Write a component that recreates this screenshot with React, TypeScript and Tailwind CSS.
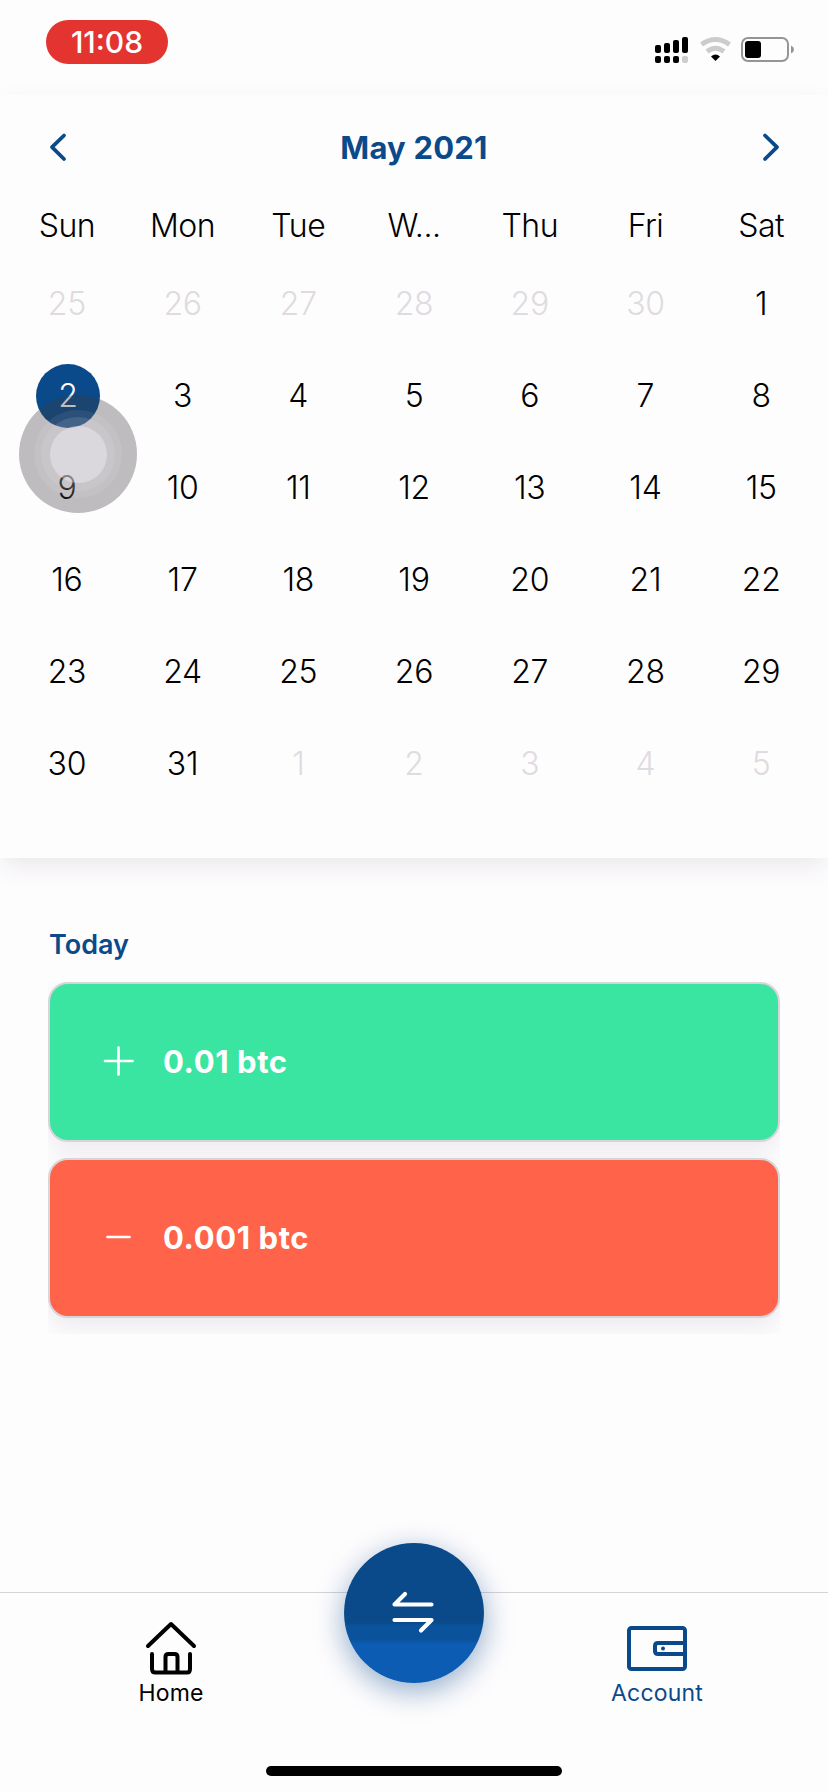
const weekdays = ['Sun', 'Mon', 'Tue', 'W...', 'Thu', 'Fri', 'Sat'];

const days = Array.from({ length: 42 }, (_, i) => {
  if (i < 6) return { label: 25 + i, muted: true };
  if (i < 37) return { label: i - 5, muted: false };
  return { label: i - 36, muted: true };
});

function StatusBar() {
  return (
    <header className="flex h-[95px] items-start justify-between pt-5 pr-[34px] pl-[46px]">
      <div className="flex h-11 w-[122px] items-center justify-center rounded-full bg-[#e3342f] text-[30px] leading-none font-[450] text-white">
        11:08
      </div>
      <svg className="mt-4 h-7 w-[140px]" viewBox="654 36 140 28" fill="#000">
        <rect x="655" y="45" width="6" height="8" rx="2" />
        <rect x="664" y="43" width="6" height="10" rx="2" />
        <rect x="673" y="40" width="6" height="13" rx="2" />
        <rect x="682" y="37" width="6" height="16" rx="2" />
        <rect x="655" y="56" width="6" height="7" rx="2" />
        <rect x="664" y="56" width="6" height="7" rx="2" />
        <rect x="673" y="56" width="6" height="7" rx="2" />
        <rect x="682" y="56" width="6" height="7" rx="2" fill="#cdcbce" />
        <path d="M701.5 44.5Q715.5 34.5 729.5 44.5" fill="none" stroke="#cdcbce" strokeWidth="5" />
        <path d="M707 51.5Q715.5 45 724 51.5" fill="none" stroke="#cdcbce" strokeWidth="5" />
        <path d="M711 56.5Q715.5 52.5 720 56.5L715.5 61Z" />
        <rect x="742" y="38" width="46" height="23" rx="6" fill="none" stroke="#969498" strokeWidth="2" />
        <rect x="745" y="41" width="16" height="17" rx="3" />
        <path d="M791 45.500Q794 47 794 49.500Q794 52 791 53.500Z" fill="#969498" />
      </svg>
    </header>
  );
}

function Chevron({ left = false }: { left?: boolean }) {
  return (
    <svg className="h-8 w-5" viewBox="0 0 20 32" fill="none" stroke="#0b4a8a" strokeWidth="3.8" strokeLinecap="round" strokeLinejoin="round">
      <path d={left ? 'M17 4.500L5 16.200L17 28' : 'M4 4.500L16 16.200L4 28'} />
    </svg>
  );
}

function Calendar() {
  return (
    <section className="relative h-[763px] bg-[#fefdfe] px-[9px] pt-9 shadow-[0_10px_24px_-2px_rgba(60,40,70,0.1)]">
      <div className="flex h-8 items-center justify-between pr-[38px] pl-[38px]">
        <Chevron left />
        <h1 className="text-[31px] leading-none font-bold tracking-[0.2px] text-[#0b4a8a]">May 2021</h1>
        <Chevron />
      </div>
      <div className="mt-[43px] grid h-10 grid-cols-7 place-items-center text-[32px] leading-none font-light tracking-[-0.5px]">
        {weekdays.map((d) => (
          <span key={d}>{d}</span>
        ))}
      </div>
      <div className="mt-[12px] grid auto-rows-[92px] grid-cols-7 place-items-center text-[32px] leading-none font-light tracking-[-0.3px]">
        {days.map(({ label, muted }, i) => (
          <span
            key={i}
            className={
              i === 7
                ? 'flex size-16 translate-x-px items-center justify-center rounded-full bg-[#0b4a8a] text-white'
                : muted
                  ? 'text-[#dfdbe0]'
                  : 'text-black'
            }
          >
            {label}
          </span>
        ))}
      </div>
      <div className="absolute top-[300px] left-[19px] flex size-[118px] items-center justify-center rounded-full bg-[#3c393e]/33">
        <div className="flex size-[88px] items-center justify-center rounded-full bg-white/7">
          <div className="flex size-[74px] items-center justify-center rounded-full bg-[#f4f0f8]/12">
            <div className="size-[57px] rounded-full bg-[#f6f2fa]/40" />
          </div>
        </div>
      </div>
    </section>
  );
}

function Transaction({ positive, amount }: { positive: boolean; amount: string }) {
  return (
    <div
      className={`mb-4 flex h-40 items-center rounded-[20px] border-2 border-[#d8d5da] pl-[53px] shadow-[0_10px_24px_rgba(60,40,70,0.09)] ${
        positive ? 'bg-[#3ae5a2]' : 'bg-[#ff634a]'
      }`}
    >
      <svg className="size-8" viewBox="0 0 32 32" stroke="#fff" strokeWidth="2.7" strokeLinecap="round">
        {positive ? <path d="M2 15H29.500M15.500 1.500V28.500" /> : <path d="M4.500 15H26.500" />}
      </svg>
      <span className="mb-0.5 ml-7 text-[31px] leading-none font-bold tracking-[0.6px] text-white">{amount}</span>
    </div>
  );
}

function TabBar() {
  return (
    <nav className="relative flex h-[200px] justify-between border-t border-[#d5d3d7] bg-[#fefdfe] px-[122px]">
      <div className="flex w-[98px] flex-col items-center pt-[26px]">
        <svg className="h-14 w-[60px]" viewBox="141 1619 60 56" fill="none" stroke="#000" strokeWidth="4" strokeLinecap="round" strokeLinejoin="round">
          <path d="M148 1646L171 1624L194 1646" />
          <path d="M152 1654V1669Q152 1672.500 155.500 1672.500H187Q190 1672.500 190 1669V1654" />
          <path d="M165.500 1672V1657Q165.500 1654 168.500 1654H174.500Q177.500 1654 177.500 1657V1672" />
        </svg>
        <span className="mt-0.5 text-[23px] leading-8 tracking-[0.2px]">Home</span>
      </div>
      <div className="flex w-[98px] flex-col items-center pt-[26px] text-[#0b4a8a]">
        <svg className="h-14 w-[62px]" viewBox="625 1619 62 56" fill="none" stroke="currentColor" strokeWidth="4" strokeLinejoin="round">
          <rect x="628" y="1628" width="56" height="41" rx="2.500" />
          <path d="M684 1643H657Q654 1643 654 1646V1651Q654 1654 657 1654H684" />
          <circle cx="662" cy="1648.500" r="2" fill="currentColor" stroke="none" />
        </svg>
        <span className="mt-0.5 text-[23px] leading-8 tracking-[0.2px]">Account</span>
      </div>
      <button className="absolute -top-[50px] left-[344px] flex size-[140px] items-center justify-center rounded-full bg-[linear-gradient(180deg,#0b4a8a_0%,#0b4a8a_57%,#0a529c_59%,#0a529c_69%,#0b5cb2_72%,#0b5cb2_100%)] shadow-[0_8px_30px_rgba(11,74,138,0.45)]">
        <svg className="size-12" viewBox="0 0 48 48" fill="none" stroke="#fff" strokeWidth="4.200" strokeLinecap="round" strokeLinejoin="round">
          <path d="M41.500 15.500H4.500L15 5M4.500 31H41.500L31 41.500" />
        </svg>
      </button>
      <div className="absolute top-[173px] left-[266px] h-[10px] w-[296px] rounded-full bg-black" />
    </nav>
  );
}

export default function App() {
  return (
    <div className="flex h-[1792px] w-[828px] flex-col overflow-hidden bg-[#fefdfe] font-['Inter',sans-serif] text-black">
      <StatusBar />
      <Calendar />
      <main className="flex-1 px-12 pt-[71px]">
        <h2 className="h-8 pl-px text-[27px] leading-8 font-semibold text-[#0b4a8a]">Today</h2>
        <div className="mt-[21px] h-[352px] overflow-hidden">
          <Transaction positive amount="0.01 btc" />
          <Transaction positive={false} amount="0.001 btc" />
        </div>
      </main>
      <TabBar />
    </div>
  );
}
